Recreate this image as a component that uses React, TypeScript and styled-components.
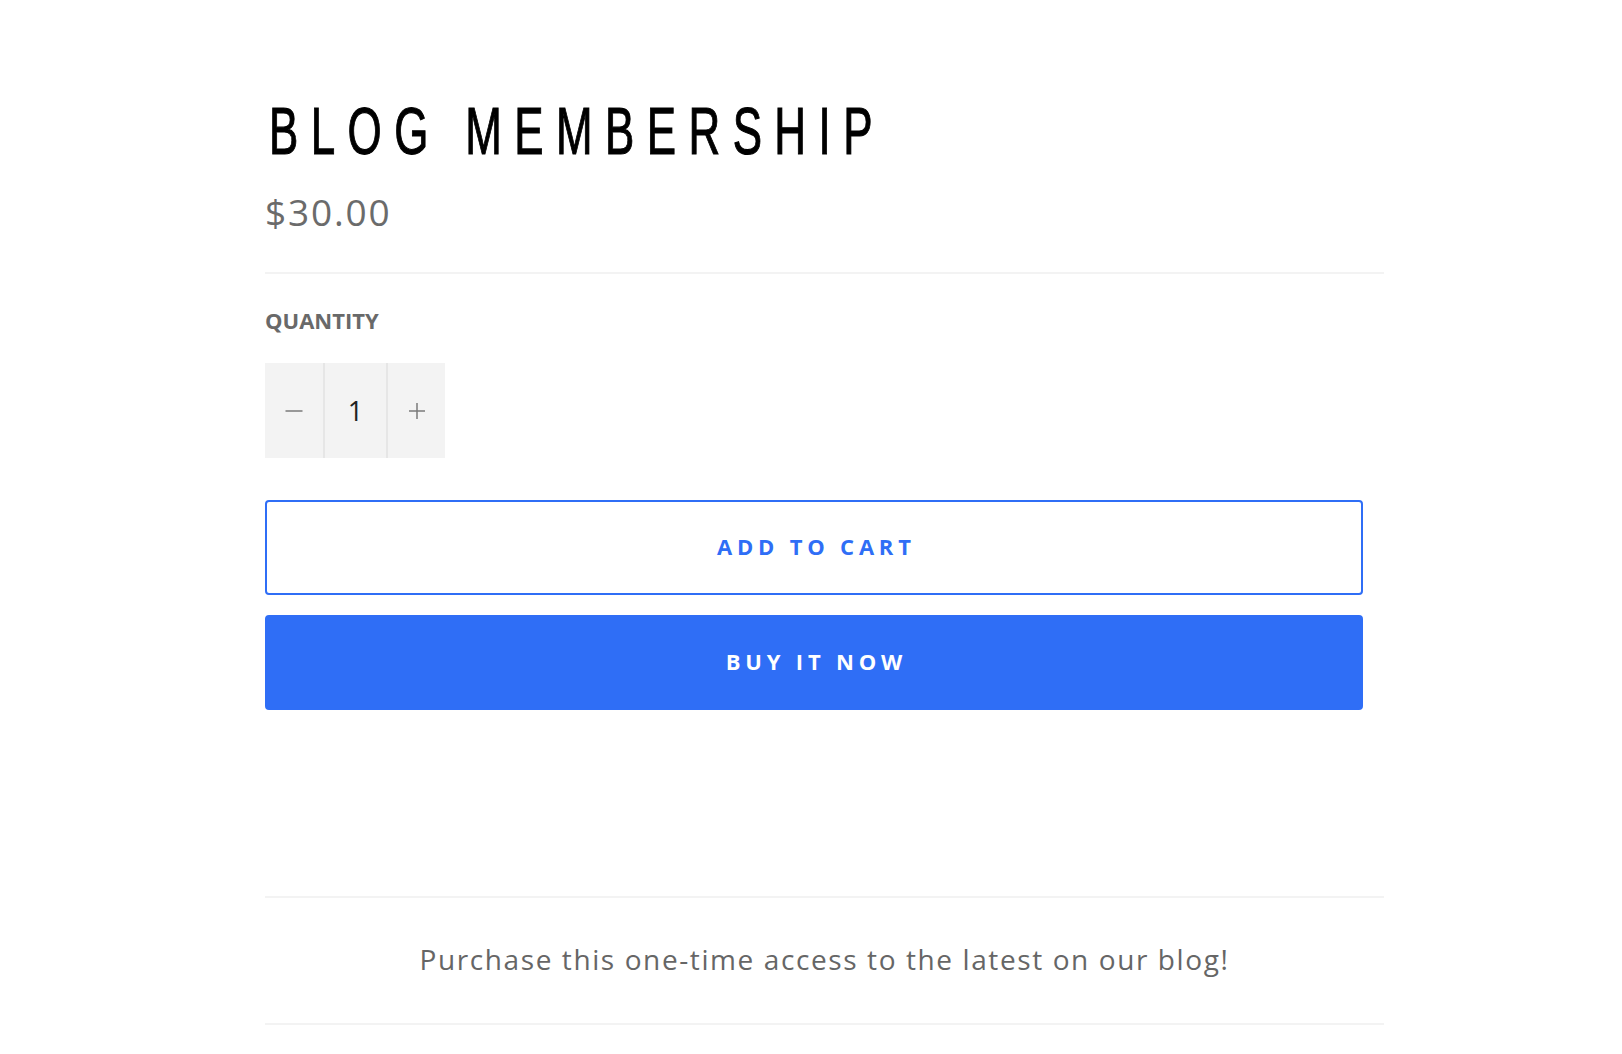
import React from "react";
import styled, { createGlobalStyle } from "styled-components";

const Global = createGlobalStyle`
  html, body { margin: 0; padding: 0; background: #fff; }
  body { font-family: "Open Sans", "Liberation Sans", sans-serif; }
`;

const Page = styled.div`
  padding: 97px 0 0 265px;
`;

const Column = styled.div`
  width: 1119px;
  display: flex;
  flex-direction: column;
`;

const Title = styled.h1`
  margin: 0 0 0 4px;
  font-family: "Liberation Sans", Arial, sans-serif;
  font-weight: 400;
  font-size: 67px;
  line-height: 67px;
  letter-spacing: 19px;
  color: #000;
  white-space: nowrap;
  -webkit-text-stroke: 1.1px #000;
  transform: scaleX(0.655);
  transform-origin: left center;
`;

const Price = styled.div`
  margin-top: 26px;
  font-family: "Open Sans", sans-serif;
  font-size: 37px;
  line-height: 44px;
  letter-spacing: 0.05em;
  color: #6b6b6b;
`;

const Divider = styled.hr<{ $top: number }>`
  margin: ${(p) => p.$top}px 0 0;
  border: 0;
  height: 2px;
  background: #f3f3f3;
`;

const Label = styled.div`
  margin-top: 33px;
  font-family: "Open Sans", sans-serif;
  font-weight: 700;
  font-size: 22px;
  line-height: 26px;
  color: #696969;
`;

const Qty = styled.div`
  margin-top: 30px;
  display: flex;
  width: 180px;
  height: 95px;
  background: #f3f3f3;
`;

const QtyCell = styled.div<{ $w: number; $border?: boolean }>`
  width: ${(p) => p.$w}px;
  box-sizing: border-box;
  display: flex;
  align-items: center;
  justify-content: center;
  border-left: ${(p) => (p.$border ? "2px solid #e6e6e6" : "none")};
`;

const QtyValue = styled.span`
  font-family: "Open Sans", sans-serif;
  font-size: 27px;
  line-height: 1;
  color: #222;
`;

const Button = styled.button<{ $filled?: boolean }>`
  width: 1098px;
  height: 95px;
  border-radius: 4px;
  box-sizing: border-box;
  border: 2px solid #2f6ef6;
  background: ${(p) => (p.$filled ? "#2f6ef6" : "#fff")};
  color: ${(p) => (p.$filled ? "#fff" : "#2f6ef6")};
  font-family: "Open Sans", sans-serif;
  font-weight: 700;
  font-size: 22px;
  letter-spacing: 4.8px;
  padding: 0 0 4px 4.8px;
  margin-top: ${(p) => (p.$filled ? 20 : 42)}px;
  cursor: pointer;
`;

const Description = styled.p`
  margin: 0;
  padding: 41px 0 44px;
  text-align: center;
  font-family: "Open Sans", sans-serif;
  font-size: 28px;
  line-height: 40px;
  color: #666;
  letter-spacing: 1.6px;
`;

const MinusIcon = () => (
  <svg width="18" height="18" viewBox="0 0 18 18">
    <line x1="0.5" y1="9" x2="17.5" y2="9" stroke="#7a7a7a" strokeWidth="1.5" />
  </svg>
);

const PlusIcon = () => (
  <svg width="18" height="18" viewBox="0 0 18 18">
    <line x1="1" y1="9" x2="17" y2="9" stroke="#7a7a7a" strokeWidth="1.5" />
    <line x1="9" y1="1" x2="9" y2="17" stroke="#7a7a7a" strokeWidth="1.5" />
  </svg>
);

export default function App() {
  return (
    <>
      <Global />
      <Page>
        <Column>
          <Title>BLOG MEMBERSHIP</Title>
          <Price>$30.00</Price>
          <Divider $top={38} />
          <Label>QUANTITY</Label>
          <Qty>
            <QtyCell $w={58}>
              <MinusIcon />
            </QtyCell>
            <QtyCell $w={63} $border>
              <QtyValue>1</QtyValue>
            </QtyCell>
            <QtyCell $w={59} $border>
              <PlusIcon />
            </QtyCell>
          </Qty>
          <Button>ADD TO CART</Button>
          <Button $filled>BUY IT NOW</Button>
          <Divider $top={186} />
          <Description>Purchase this one-time access to the latest on our blog!</Description>
          <Divider $top={0} />
        </Column>
      </Page>
    </>
  );
}
